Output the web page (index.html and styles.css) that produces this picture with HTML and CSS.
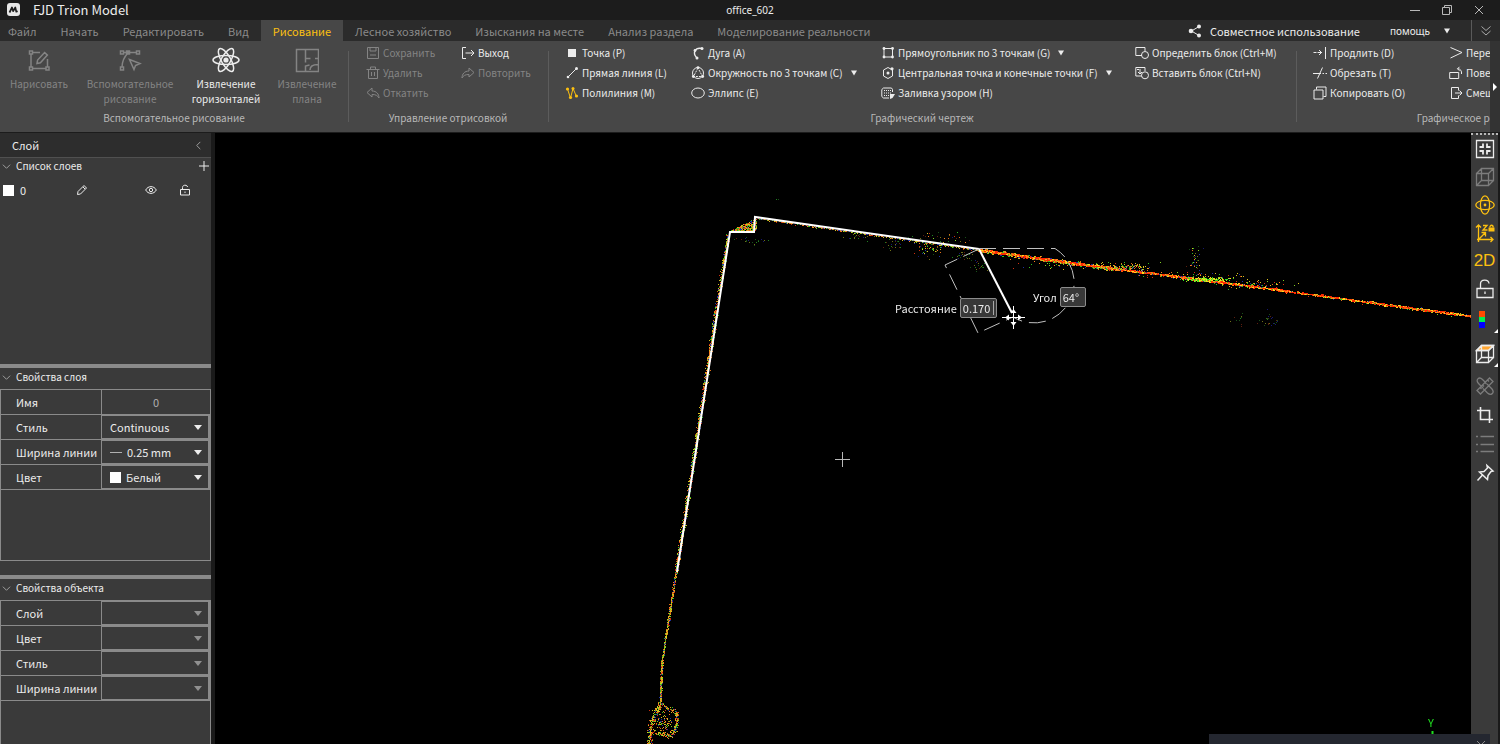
FILE: index.html
```html
<!DOCTYPE html>
<html lang="ru">
<head>
<meta charset="utf-8">
<title>FJD Trion Model</title>
<link rel="stylesheet" href="styles.css">
</head>
<body>
<div class="app">
  <header class="titlebar">
    <div class="brand">
      <svg class="logo" viewBox="0 0 14 14"><rect x="0" y="0" width="13" height="13" rx="3" fill="#e6e6e6"/><path d="M2.500 9.500 5 4.500 6.200 8.200 8.300 4.500 9.300 8.700 10.700 8.300" fill="none" stroke="#1c1c1c" stroke-width="1.700" stroke-linejoin="round"/></svg>
      <h1 class="brand-name">FJD Trion Model</h1>
    </div>
    <span class="doc-name">office_602</span>
    <div class="window-buttons">
      <button class="win" aria-label="Свернуть"><svg viewBox="0 0 12 12"><path d="M1 6.500h10"/></svg></button>
      <button class="win" aria-label="Развернуть"><svg viewBox="0 0 12 12"><path d="M1.500 3.500h7v7h-7zM3.500 3V1.500h7v7H9"/></svg></button>
      <button class="win" aria-label="Закрыть"><svg viewBox="0 0 12 12"><path d="M2 2l8 8M10 2l-8 8"/></svg></button>
    </div>
  </header>

  <div class="menubar">
    <nav class="tabs">
      <button class="tab">Файл</button>
      <button class="tab">Начать</button>
      <button class="tab">Редактировать</button>
      <button class="tab">Вид</button>
      <button class="tab tab-active">Рисование</button>
      <button class="tab">Лесное хозяйство</button>
      <button class="tab">Изыскания на месте</button>
      <button class="tab">Анализ раздела</button>
      <button class="tab">Моделирование реальности</button>
    </nav>
    <div class="menu-right">
      <button class="share"><svg class="ic" viewBox="0 0 14 14"><path d="M11 2.500 3.500 7l7.500 4.500"/><g class="fill"><circle cx="3" cy="7" r="2.300"/><circle cx="11" cy="2.600" r="2"/><circle cx="11" cy="11.400" r="2"/></g></svg>Совместное использование</button>
      <button class="help">помощь<svg class="caret" viewBox="0 0 6 6"><path d="M0 .500h6L3 5.500z"/></svg></button>
      <button class="collapse" aria-label="Свернуть ленту"><svg class="ic" viewBox="0 0 14 14"><path d="M2.500 2.500 7 6.500l4.500-4M2.500 7 7 11l4.500-4"/></svg></button>
    </div>
  </div>

  <div class="ribbon">
    <div class="groups">
      <section class="group group-assist">
        <div class="big-tools">
          <button class="big" disabled><svg viewBox="0 0 24 24"><path d="M5 4.500h8M4 6v13M6 20.500h13M20.500 11v8M2.500 3h3v3h-3zM2.500 19h3v3h-3zM19 19h3v3h-3zM10 15.500l.600-3.500 7-7.500 2.800 2.600-7 7.600z"/></svg>Нарисовать</button>
          <button class="big" disabled><svg viewBox="0 0 24 24"><path d="M5.500 4.500h13M10 5C6 9 4.200 13 4 19M2.500 3h3v3h-3zM18.500 3h3v3h-3zM8.500 3h3v3h-3zM2.500 19h3v3h-3zM11.500 11.500l10.500 4-4.500 2-1.500 4z"/></svg>Вспомогательное рисование</button>
          <button class="big"><svg class="atom" viewBox="0 0 28 26"><ellipse cx="14" cy="13" rx="13" ry="4.600"/><ellipse cx="14" cy="13" rx="13" ry="4.600" transform="rotate(60 14 13)"/><ellipse cx="14" cy="13" rx="13" ry="4.600" transform="rotate(120 14 13)"/><circle class="fill" cx="14" cy="13" r="2.600"/></svg>Извлечение горизонталей</button>
          <button class="big" disabled><svg viewBox="0 0 24 24"><path d="M1.500 1.500h22v22h-22zM10.500 2v12.500M10.500 10.500h5M20 10.500h3M10.500 23v-5l4-1M15 22c0-4 3-5.500 8-5.500"/></svg>Извлечение плана</button>
        </div>
        <h2 class="group-name">Вспомогательное рисование</h2>
      </section>

      <section class="group group-manage">
        <div class="tools">
          <button class="tool" disabled><svg class="ic" viewBox="0 0 14 14"><path d="M1.500 1.500h11v11h-11zM4 1.500v3.500h6V1.500M4 9h6"/></svg>Сохранить</button>
          <button class="tool" disabled><svg class="ic" viewBox="0 0 14 14"><path d="M.500 3.500h13M4.500 3V1h5v2M2.500 3.500v9h9v-9M5.500 6v4M8.500 6v4"/></svg>Удалить</button>
          <button class="tool" disabled><svg class="ic" viewBox="0 0 14 14"><path d="M6 2 1 6.500 6 11V8.500c4 0 5.500 1 7 3.500 0-4-2.500-7-7-7z"/></svg>Откатить</button>
          <button class="tool"><svg class="ic" viewBox="0 0 14 14"><path d="M5 1.500H1.500v11H5M4.500 7h8.500M10 4l3 3-3 3"/></svg>Выход</button>
          <button class="tool" disabled><svg class="ic" viewBox="0 0 14 14"><path d="M8 2l5 4.500L8 11V8.500c-4 0-5.500 1-7 3.500 0-4 2.500-7 7-7z"/></svg>Повторить</button>
        </div>
        <h2 class="group-name">Управление отрисовкой</h2>
      </section>

      <section class="group group-draw">
        <div class="tools">
          <button class="tool"><svg class="ic" viewBox="0 0 14 14"><rect class="fill" x="3" y="3" width="8" height="8"/></svg>Точка (P)</button>
          <button class="tool"><svg class="ic" viewBox="0 0 14 14"><path d="M3 11l8-8"/><g class="fill"><circle cx="3" cy="11" r="1.300"/><circle cx="11.500" cy="2.500" r="1.500"/></g></svg>Прямая линия (L)</button>
          <button class="tool"><svg class="ic gold" viewBox="0 0 14 14"><path d="M2.500 3l3 9L8 2.500l3.500 8"/><g class="fill"><circle cx="2.500" cy="3" r="1.600"/><circle cx="5.500" cy="11.500" r="1.600"/><circle cx="8" cy="2.500" r="1.500"/><circle cx="11.500" cy="10" r="1.600"/></g></svg>Полилиния (M)</button>
          <button class="tool"><svg class="ic" viewBox="0 0 14 14"><path stroke-width="1.400" d="M11 2.500C4 1 1 7 6 12"/><g class="fill"><circle cx="11" cy="2.500" r="1.500"/><circle cx="4" cy="4.500" r="1.400"/><circle cx="6" cy="12" r="1.500"/></g></svg>Дуга (A)</button>
          <button class="tool"><svg class="ic" viewBox="0 0 14 14"><circle cx="7" cy="7" r="5.500"/><path stroke-dasharray="2 1" d="M7 2 2.500 10.500h9z"/><g class="fill"><circle cx="7" cy="1.600" r="1.400"/><circle cx="2.300" cy="10.500" r="1.400"/><circle cx="11.700" cy="10.500" r="1.400"/></g></svg>Окружность по 3 точкам (C)<svg class="caret" viewBox="0 0 6 6"><path d="M0 .500h6L3 5.500z"/></svg></button>
          <button class="tool"><svg class="ic" viewBox="0 0 14 14"><ellipse cx="7" cy="7" rx="6.300" ry="5"/></svg>Эллипс (E)</button>
          <button class="tool"><svg class="ic" viewBox="0 0 14 14"><path d="M3 2.500h8.500v8.500H3z"/><g class="fill"><circle cx="3" cy="2.500" r="1.400"/><circle cx="11.500" cy="2.500" r="1.400"/><circle cx="3" cy="11" r="1.400"/><circle cx="11.500" cy="11" r="1.400"/></g></svg>Прямоугольник по 3 точкам (G)<svg class="caret" viewBox="0 0 6 6"><path d="M0 .500h6L3 5.500z"/></svg></button>
          <button class="tool"><svg class="ic" viewBox="0 0 14 14"><path d="M7 1.500 11.500 4v6L7 12.500 2.500 10V4z"/><g class="fill"><circle cx="7" cy="7" r="1.500"/><circle cx="11" cy="2.800" r="1.600"/></g></svg>Центральная точка и конечные точки (F)<svg class="caret" viewBox="0 0 6 6"><path d="M0 .500h6L3 5.500z"/></svg></button>
          <button class="tool"><svg class="ic" viewBox="0 0 14 14"><path d="M11.500 6V3.500l-1-1.500h-8L.800 3.500v7l1.700 1.500H8"/><path stroke-dasharray="1 1" d="M3 4.500h7M3 7h7M3 9.500h5"/><path class="fill" d="M9 8h5l-2.500 4-2.500 1z"/></svg>Заливка узором (H)</button>
          <button class="tool"><svg class="ic" viewBox="0 0 14 14"><path d="M7 9.500H.800v-8H10V5"/><circle cx="10" cy="9" r="3.500"/></svg>Определить блок (Ctrl+M)</button>
          <button class="tool"><svg class="ic" viewBox="0 0 14 14"><path d="M7 10H.800V1.500H10V5M5 3v5M3 6l2 2 2-2M2 3.500h2"/><circle cx="10" cy="9.300" r="3.500"/></svg>Вставить блок (Ctrl+N)</button>
        </div>
        <h2 class="group-name">Графический чертеж</h2>
      </section>

      <section class="group group-edit">
        <div class="tools">
          <button class="tool"><svg class="ic" viewBox="0 0 14 14"><path d="M.500 6.500h3M4.500 6.500h4.500M6 4l2.500 2.500L6 9M12.500 1v12"/></svg>Продлить (D)</button>
          <button class="tool"><svg class="ic" viewBox="0 0 14 14"><path d="M0 7.500h8M9.500 7.500h1.500M12.500 7.500H14M9.500 1.500l-5 11"/></svg>Обрезать (T)</button>
          <button class="tool"><svg class="ic" viewBox="0 0 14 14"><path d="M1 4h9v9H1zM3.500 3.500V1H13v9.500h-2.500"/></svg>Копировать (O)</button>
          <button class="tool"><svg class="ic" viewBox="0 0 14 14"><path d="M1.500 1.500 13 6.500 1.500 12"/></svg>Перенести (V)</button>
          <button class="tool"><svg class="ic" viewBox="0 0 14 14"><path d="M.700 6.500h9v6h-9zM12.500 8c.500-3-1-5.300-4-5.300M10.500.800l-2 2 2 2"/></svg>Повернуть (R)</button>
          <button class="tool"><svg class="ic" viewBox="0 0 14 14"><path d="M9.500 4.500v-3h-7v11h7v-3M6 7h7M10.500 4.500 13 7l-2.500 2.500"/></svg>Смещение (S)</button>
        </div>
        <h2 class="group-name">Графическое редактирование</h2>
      </section>
    </div>
    <button class="ribbon-scroll" aria-label="Прокрутить ленту"><svg viewBox="0 0 4 8"><path d="M0 0v8l4-4z"/></svg></button>
  </div>

  <main class="workspace">
    <aside class="side">
      <div class="side-head"><h2>Слой</h2><button class="plain" aria-label="Скрыть панель"><svg class="mini" viewBox="0 0 10 10"><path d="M7 1 3 5l4 4"/></svg></button></div>
      <section class="layers">
        <div class="sec-head"><svg class="mini" viewBox="0 0 10 10"><path d="M1 3l4 4 4-4"/></svg><h3>Список слоев</h3><button class="plain add" aria-label="Добавить слой"><svg viewBox="0 0 12 12"><path d="M6 1v10M1 6h10"/></svg></button></div>
        <div class="layer">
          <span class="swatch"></span><span class="layer-name">0</span>
          <button class="plain" aria-label="Изменить"><svg viewBox="0 0 12 12"><path d="M1.500 10.500 2 7.500l6-6 2.500 2.500-6 6zM7 3l2 2"/></svg></button>
          <button class="plain" aria-label="Видимость"><svg viewBox="0 0 12 12"><path d="M.700 6C3 1.500 9 1.500 11.300 6 9 10.500 3 10.500.700 6z"/><circle cx="6" cy="6" r="1.700"/></svg></button>
          <button class="plain" aria-label="Блокировка"><svg viewBox="0 0 12 12"><path d="M1.500 5.500h9v5.500h-9zM3.500 5.500V3.500c0-3 5-3 5-.500M6 7.500V9"/></svg></button>
        </div>
      </section>
      <section class="props props-layer">
        <div class="sec-head"><svg class="mini" viewBox="0 0 10 10"><path d="M1 3l4 4 4-4"/></svg><h3>Свойства слоя</h3></div>
        <div class="frame">
          <label class="row"><span class="key">Имя</span><input class="val name-input" value="0" readonly></label>
          <label class="row"><span class="key">Стиль</span><span class="val combo"><select><option>Continuous</option></select><svg class="drop" viewBox="0 0 8 5"><path d="M0 0h8L4 5z"/></svg></span></label>
          <label class="row"><span class="key">Ширина линии</span><span class="val combo"><span class="line-sample"></span><select><option>0.25 mm</option></select><svg class="drop" viewBox="0 0 8 5"><path d="M0 0h8L4 5z"/></svg></span></label>
          <label class="row"><span class="key">Цвет</span><span class="val combo"><span class="swatch"></span><select><option>Белый</option></select><svg class="drop" viewBox="0 0 8 5"><path d="M0 0h8L4 5z"/></svg></span></label>
        </div>
      </section>
      <section class="props props-object">
        <div class="sec-head"><svg class="mini" viewBox="0 0 10 10"><path d="M1 3l4 4 4-4"/></svg><h3>Свойства объекта</h3></div>
        <div class="frame">
          <label class="row"><span class="key">Слой</span><span class="val combo off"><select disabled></select><svg class="drop" viewBox="0 0 8 5"><path d="M0 0h8L4 5z"/></svg></span></label>
          <label class="row"><span class="key">Цвет</span><span class="val combo off"><select disabled></select><svg class="drop" viewBox="0 0 8 5"><path d="M0 0h8L4 5z"/></svg></span></label>
          <label class="row"><span class="key">Стиль</span><span class="val combo off"><select disabled></select><svg class="drop" viewBox="0 0 8 5"><path d="M0 0h8L4 5z"/></svg></span></label>
          <label class="row"><span class="key">Ширина линии</span><span class="val combo off"><select disabled></select><svg class="drop" viewBox="0 0 8 5"><path d="M0 0h8L4 5z"/></svg></span></label>
        </div>
      </section>
    </aside>

    <div class="view">
      <canvas class="cloud" id="cloud"></canvas>
      <svg class="sketch">
        <path class="poly" d="M462 439 515 99H539L540 84 764 116"/>
        <path class="poly" d="M764 116 797 180"/>
        <path class="dash" d="M764 116 730 132 763 200 798 184"/>
        <path class="dash" d="M764 115.500H840A40 40 0 0 1 798 184"/>
        <path class="cross" d="M620 326.500h15M627.500 319v15"/>
        <path class="cursor" d="M787 184.500h23M798.500 173v23"/>
        <path class="cursor-tip" d="M790 184.500l4-3v6zM807 184.500l-4-3v6zM798.500 176l-3 4h6zM798.500 193l-3-4h6z"/>
        <path class="axis" d="M1217.500 598v6"/>
      </svg>
      <label class="measure measure-distance">Расстояние <span class="measure-box"><input class="measure-input" value="0.170"><span class="text-caret"></span></span></label>
      <label class="measure measure-angle">Угол <span class="measure-box"><input class="measure-input short" value="64°"></span></label>
      <span class="axis-name">Y</span>
    </div>

    <div class="viewtools">
      <button aria-label="Показать всё"><svg viewBox="0 0 20 20"><path d="M1.500 1.500h17v17h-17z"/><path stroke-width="1.800" d="M8 4.500V8H4.500M12 4.500V8h3.500M8 15.500V12H4.500M12 15.500V12h3.500"/></svg></button>
      <button aria-label="Каркас" class="dim"><svg viewBox="0 0 20 20"><path d="M1.500 6.500h12v12h-12zM6.500 1.500h12v12h-12zM1.500 6.500l5-5M13.500 6.500l5-5M1.500 18.500l5-5M13.500 18.500l5-5"/></svg></button>
      <button aria-label="Орбита" class="gold"><svg viewBox="0 0 20 20"><ellipse cx="10" cy="10" rx="9.200" ry="4.600"/><ellipse cx="10" cy="10" rx="4.600" ry="9.200"/><circle class="fill" cx="10" cy="10" r="1.400"/></svg></button>
      <button aria-label="Блокировка Z" class="gold"><svg viewBox="0 0 20 20"><path d="M3.500 19V2M1 4.500 3.500 2 6 4.500M2 16.500h16M15.500 14l2.500 2.500-2.500 2.500M4 16l6-6M6.500 9.500h4v4M8 2.500h4L8 7h4.500"/><path class="fill" d="M13.500 4.500h6v4h-6z"/><path d="M14.800 4.500c0-3 3.400-3 3.400 0"/></svg></button>
      <button class="gold mode">2D</button>
      <button aria-label="Разблокировано"><svg viewBox="0 0 20 20"><path d="M2 9.500h16v9H2zM5.500 9.500V5c0-5 8-5 8.500-.500M10 12.500V15"/></svg></button>
      <button aria-label="Цвет облака" class="more"><svg viewBox="0 0 20 20"><g stroke="none"><path fill="#ff4a00" d="M4 1h6v6H4z"/><path fill="#00f050" d="M4 7h6v5H4z"/><path fill="#0000ff" d="M4 12h6v6H4z"/></g></svg></button>
      <button aria-label="Вид сверху" class="more"><svg viewBox="0 0 20 20"><path fill="#ffa632" d="M1.500 6.500l5-5h12l-5 5z"/><path d="M1.500 6.500h12v12h-12zM6.500 1.500h12v12h-12zM1.500 6.500l5-5M13.500 6.500l5-5M1.500 18.500l5-5M13.500 18.500l5-5"/></svg></button>
      <button aria-label="Измерения" class="dim tall"><svg viewBox="0 0 20 20"><path d="M8 12 3.500 7.500C0 4 4 0 7.500 3.500L10 6M12 8l5 5c3 4-1 7-4.500 4L8 12.500M2 14.500 14.500 2l3.500 3.500L5.500 18zM10 6.500l1.500 1.500M12.500 4l1.500 1.500M7.500 9l1.500 1.500M5 11.500 6.500 13"/></svg></button>
      <button aria-label="Обрезка"><svg viewBox="0 0 20 20"><path stroke-width="1.600" d="M5.500 2v12.500H18M2 5.500h12.500V18"/></svg></button>
      <button aria-label="Список" class="dim tall"><svg viewBox="0 0 20 20"><path d="M1 2.500h2M5.500 2.500H19M1 10.500h2M5.500 10.500H19M1 17.500h2M5.500 17.500H19"/></svg></button>
      <button aria-label="Закрепить"><svg viewBox="0 0 20 20"><path stroke-width="1.500" d="M2.500 17.500 7.500 12M12 2.500l6 5.500-2 .500-3 4-.500 4L4.500 9l4.500-.500 3.500-3.500z"/></svg></button>
    </div>

    <div class="docked"><button class="plain" aria-label="Закрыть панель"><svg viewBox="0 0 10 10"><path d="M1 1l8 8M9 1l-8 8"/></svg></button></div>
  </main>
</div>
<script src="cloud.js"></script>
</body>
</html>
```
FILE: styles.css
```css
* { box-sizing: border-box; }
body {
  margin: 0;
  background: #1a1a1a;
  color: #ececec;
  font-family: "Noto Sans CJK SC", "Noto Sans", sans-serif;
  font-size: 11px;
  line-height: 16px;
}
h1, h2, h3 { margin: 0; font-size: inherit; font-weight: 400; }
button, input, select { font: inherit; color: inherit; margin: 0; padding: 0; border: 0; background: none; }
svg { display: block; fill: none; stroke: currentColor; flex: none; }
.fill { fill: currentColor; stroke: none; }
.gold { color: #fcc010; }
.ic { width: 14px; height: 14px; }
.caret { width: 6px; height: 6px; fill: currentColor; stroke: none; }

.app { display: flex; flex-direction: column; height: 100vh; overflow: hidden; }

.titlebar { display: grid; grid-template-columns: 1fr auto 1fr; align-items: center; height: 20px; background: #1c1c1c; }
.brand { display: flex; align-items: center; gap: 12px; padding-left: 7px; }
.logo { width: 14px; height: 14px; stroke: none; }
.brand-name { font-size: 13px; }
.doc-name { font-family: "Noto Sans", sans-serif; font-size: 10px; }
.window-buttons { display: flex; justify-content: flex-end; gap: 20px; padding-right: 15px; color: #b8b8b8; }
.win svg { width: 12px; height: 12px; }

.menubar { display: flex; justify-content: space-between; height: 21px; background: #2b2b2b; flex: none; }
.tabs { display: flex; margin-left: -4px; }
.tab { padding: 0 12px; color: #8a8a8a; line-height: 20px; white-space: nowrap; }
.tab-active { background: #474747; color: #fcc010; }
.menu-right { display: flex; align-items: center; }
.share { display: flex; align-items: center; gap: 8px; margin-right: 30px; }
.help { display: flex; align-items: center; gap: 14px; font-family: "Noto Sans", sans-serif; font-size: 10px; margin-right: 21px; }
.collapse { display: flex; align-items: center; height: 21px; padding: 0 7px; border-left: 1px solid #5a5a5a; color: #a8a8a8; }

.ribbon { display: flex; flex: none; height: 92px; background: #474747; border-bottom: 1px solid #1c1c1c; font-size: 10px; }
.groups { display: flex; flex: 1; min-width: 0; overflow: hidden; }
.group { position: relative; flex: none; display: flex; flex-direction: column; padding-top: 2px; }
.group + .group::before { content: ""; position: absolute; left: 0; top: 10px; bottom: 10px; width: 1px; background: #5c5c5c; }
.group-name { margin-top: 5px; text-align: center; color: #b8b8b8; }
.group-assist { width: 348px; }
.group-manage { width: 200px; }
.group-draw { width: 748px; }
.group-edit { width: 390px; }

.big-tools { display: grid; grid-template-columns: 78px 104px 88px 74px; height: 62px; }
.big { display: flex; flex-direction: column; align-items: center; gap: 3px; padding-top: 4px; line-height: 15px; }
.big svg { width: 24px; height: 26px; stroke-width: 1.5; }
.big .atom { width: 28px; }
.big:disabled, .tool:disabled { color: #848484; }

.tools { display: grid; grid-auto-flow: column; grid-template-rows: repeat(3, 20px); height: 62px; }
.tool { display: flex; align-items: center; gap: 3px; white-space: nowrap; }
.tool .caret { margin-left: 5px; }
.group-manage .tools { grid-template-columns: 95px auto; padding-left: 18px; justify-content: start; }
.group-draw .tools { grid-template-columns: 126px 190px 254px auto; padding-left: 17px; justify-content: start; }
.group-edit .tools { grid-template-columns: 136px auto; padding-left: 17px; justify-content: start; }
.ribbon-scroll { width: 10px; background: #333; }
.ribbon-scroll svg { width: 4px; height: 8px; margin-left: 3px; fill: #fff; stroke: none; }

.workspace { position: relative; display: flex; flex: 1; min-height: 0; }
.side { display: flex; flex-direction: column; width: 211px; margin-right: 4px; background: #3a3a3a; flex: none; }
.plain { display: flex; }
.side svg { width: 12px; height: 12px; }
.side svg.mini { width: 9px; height: 9px; color: #a8a8a8; }
.side-head { display: flex; justify-content: space-between; align-items: center; height: 25px; padding: 0 8px 0 12px; background: #2d2d2d; border-bottom: 1px solid #505050; }
.layers { height: 206px; }
.sec-head { display: flex; align-items: center; gap: 5px; height: 16px; padding-left: 2px; font-size: 10px; }
.add { margin-left: auto; padding-right: 1px; }
.layer { display: grid; grid-template-columns: 17px 56px 69px 34px auto; align-items: center; justify-content: start; height: 32px; padding-left: 3px; }
.swatch { width: 11px; height: 11px; background: #fff; flex: none; }

.props { display: flex; flex-direction: column; border-top: 4px solid #8a8a8a; }
.props-layer { height: 211px; padding-bottom: 14px; }
.props-object { flex: 1; min-height: 0; }
.props .sec-head { height: 21px; padding-bottom: 3px; }
.frame { flex: 1; border: 1px solid #8a8a8a; }
.props-object .frame { border-bottom: 0; }
.row { display: flex; height: 25px; border-bottom: 1px solid #8a8a8a; }
.key { width: 100px; padding-left: 15px; line-height: 25px; white-space: nowrap; }
.val { flex: 1; min-width: 0; border-left: 1px solid #8a8a8a; }
.name-input { text-align: center; color: #b0b0b0; }
.combo { display: flex; align-items: center; gap: 5px; padding: 0 6px 0 8px; border: 1px solid #8a8a8a; border-right-width: 2px; }
.combo select { appearance: none; flex: 1; min-width: 0; }
.side .drop { width: 8px; height: 5px; fill: currentColor; stroke: none; }
.off { color: #909090; }
.line-sample { width: 12px; height: 1px; background: #b0b0b0; }

.view { position: relative; flex: 1; min-width: 0; overflow: hidden; background: #000; }
.cloud, .sketch { position: absolute; inset: 0; width: 100%; height: 100%; }
.poly { stroke: #fff; stroke-width: 2; }
.dash { stroke: #c0c0c0; stroke-width: 1; stroke-dasharray: 17 7; }
.cross { stroke: #b8b8b8; }
.cursor { stroke: #fff; }
.cursor-tip { fill: #fff; stroke: none; }
.axis { stroke: #20e020; stroke-width: 2; }
.measure { position: absolute; display: flex; align-items: center; gap: 3px; }
.measure-distance { left: 680px; top: 165px; }
.measure-angle { left: 818px; top: 154px; }
.measure-box { display: flex; align-items: center; height: 20px; padding: 0 2px; background: #383838; border: 1px solid #8c8c8c; border-radius: 2px; }
.measure-input { width: 30px; }
.measure-input.short { width: 20px; }
.text-caret { width: 1px; height: 14px; background: #a8a8a8; }
.axis-name { position: absolute; left: 1213px; top: 581px; color: #20e020; }

.viewtools { display: flex; flex-direction: column; align-items: center; width: 27px; margin-right: 2px; background: #3a3a3a; border-top: 2px dotted #b8b8b8; flex: none; }
.viewtools button { position: relative; display: flex; align-items: center; justify-content: center; width: 27px; height: 28px; flex: none; }
.viewtools svg { width: 20px; height: 20px; stroke-width: 1.3; }
.viewtools .dim { color: #7c7c7c; }
.viewtools .tall { height: 30px; }
.viewtools .mode { font-family: "Liberation Sans", sans-serif; font-size: 17px; }
.viewtools .more { height: 34px; }
.more::after { content: ""; position: absolute; right: 0; bottom: 4px; border: 2px solid; border-color: transparent #fff #fff transparent; }

.docked { position: absolute; right: 10px; bottom: 0; display: flex; justify-content: flex-end; width: 281px; height: 10px; padding: 6px 4px 0; overflow: hidden; background: #242730; color: #888; }
.docked svg { width: 10px; height: 10px; }
```
FILE: cloud.js
```js
const canvas = document.getElementById("cloud");
const ctx = canvas.getContext("2d");
canvas.width = canvas.clientWidth;
canvas.height = canvas.clientHeight;

let seed = 602;
const rnd = () => (seed = (seed * 16807) % 2147483647) / 2147483647;
const bell = () => rnd() + rnd() + rnd() - 1.5;
const warm = ["#ff2a00", "#ff2a00", "#ff2a00", "#ff5a10", "#ffd820", "#ff8c10"];
const mixed = ["#d03010", "#e07018", "#d8c020", "#d8c020", "#30c020", "#80d020", "#ff8020", "#2030a0"];
const faint = ["#185018", "#208020", "#181870", "#5c2010", "#707018"];

function dot(x, y, colors, size) {
  ctx.fillStyle = colors[Math.floor(rnd() * colors.length)];
  ctx.fillRect(Math.round(x), Math.round(y), size || 1, 1);
}

function wall(points, count, spread, colors, size) {
  for (let s = 0; s < points.length - 1; s++) {
    const [ax, ay] = points[s];
    const [bx, by] = points[s + 1];
    for (let i = 0; i < count; i++) {
      const t = rnd();
      dot(ax + (bx - ax) * t + bell() * spread, ay + (by - ay) * t + bell() * spread, colors, size);
    }
  }
}

function patch(cx, cy, rx, ry, count, colors) {
  for (let i = 0; i < count; i++) dot(cx + bell() * rx, cy + bell() * ry, colors);
}

// left wall and its lower, unsketched part
wall([[513, 101], [461, 439]], 1500, 2, mixed);
wall([[461, 437], [447, 527], [445, 570]], 420, 1, mixed);
wall([[445, 570], [436, 590], [434, 611]], 110, 3, mixed);
wall([[445, 570], [462, 580], [461, 594], [455, 603], [442, 600]], 60, 2, mixed);
patch(448, 590, 12, 12, 130, mixed);

// corner between the walls
for (let i = 0; i < 420; i++) {
  const t = rnd();
  dot(515 + t * 26, 98 - rnd() * t * 13, mixed);
}
patch(535, 108, 16, 4, 22, faint);
patch(562, 66, 2, 1, 2, faint);

// upper wall
wall([[541, 85], [764, 117]], 360, 1, mixed);
wall([[764, 117], [900, 136]], 350, 2, mixed, 2);
wall([[764, 117], [880, 133], [1020, 151], [1256, 183]], 800, 1, warm, 2);
wall([[764, 117], [1256, 183]], 260, 2, mixed);
patch(677, 110, 8, 6, 26, faint);
patch(715, 117, 14, 8, 50, faint.concat(mixed));
patch(725, 107, 30, 7, 50, faint.concat(mixed));
patch(748, 122, 12, 5, 24, faint);
patch(765, 132, 9, 7, 26, faint);
patch(645, 103, 12, 4, 18, faint);
patch(910, 134, 24, 3, 140, mixed);
patch(992, 146, 22, 2, 190, ["#30e020", "#a0e020", "#ffd820"]);
patch(975, 142, 50, 3, 70, mixed);
patch(1040, 151, 35, 4, 70, mixed);
patch(979, 127, 7, 13, 38, faint.concat(mixed));
patch(1022, 188, 8, 8, 10, faint);
patch(1054, 187, 12, 8, 26, faint);
patch(860, 131, 70, 5, 60, mixed);
```
